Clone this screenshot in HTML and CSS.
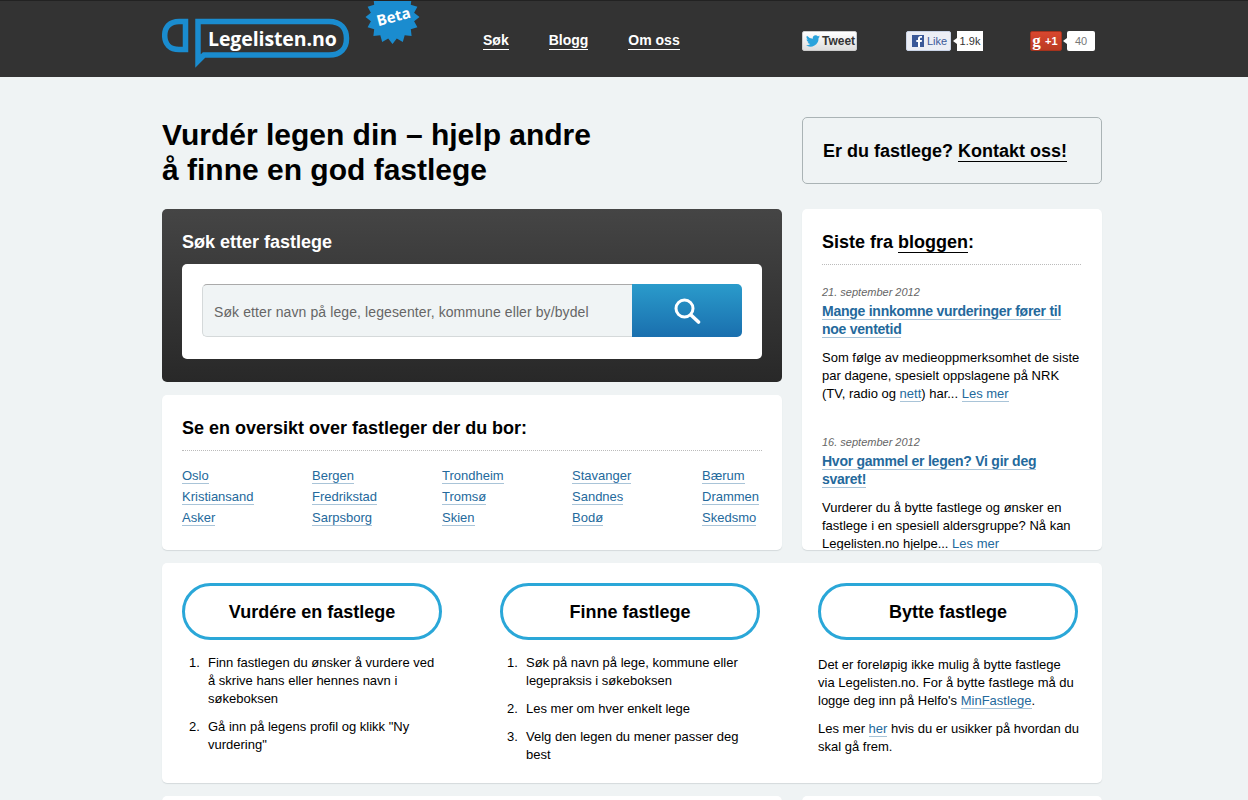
FILE: index.html
```html
<!DOCTYPE html>
<html lang="no">

<head>
  <meta charset="UTF-8">
  <title>Legelisten.no</title>
  <link rel="stylesheet" href="styles.css">
</head>

<body>
  <div class="header">
    <div class="wrap header-inner">
      <a class="logo" href="#">
        <svg class="logo-mark" width="190" height="50" viewBox="0 0 190 50">
          <path d="M23.500 3.500H17C8 3.500 2.700 9 2.700 17.500S8 31.500 17 31.500H23.500Z" fill="none" stroke="#1a8ccf" stroke-width="5.500"/>
          <path d="M36 43V3.500H167C179 3.500 184.500 11 184.500 20.500S179 37 167 37H42Z" fill="none" stroke="#1a8ccf" stroke-width="5.500"/>
        </svg>
        <span class="logo-text">Legelisten.no</span>
        <span class="beta">
          <svg width="56" height="46" viewBox="0 0 56 46">
            <polygon fill="#1a8ccf" transform="translate(0,-4)" points="54.500,20 49.100,24.300 52.400,30.300 45.800,32.200 46.600,39.100 39.700,38.300 37.800,44.900 31.800,41.600 27.500,47 23.200,41.600 17.200,44.900 15.300,38.300 8.400,39.100 9.200,32.200 2.600,30.300 5.900,24.300 0.500,20 5.900,15.700 2.600,9.700 9.200,7.800 8.400,0.900 15.300,1.700 17.200,-4.900 23.200,-1.600 27.500,-7 31.800,-1.600 37.800,-4.900 39.700,1.700 46.600,0.900 45.800,7.800 52.400,9.700 49.100,15.700"/>
          </svg>
          <span class="beta-text">Beta</span>
        </span>
      </a>

      <div class="main-nav">
        <a href="#">Søk</a>
        <a href="#">Blogg</a>
        <a href="#">Om oss</a>
      </div>

      <div class="social">
        <div class="share share-tw">
          <span class="btn btn-tw">
            <svg width="14" height="12" viewBox="0 0 24 20"><path fill="#2aa3dc" d="M24 2.400a9.800 9.800 0 0 1-2.800.8A5 5 0 0 0 23.300.5a9.800 9.800 0 0 1-3.100 1.200 4.900 4.900 0 0 0-8.400 4.500A14 14 0 0 1 1.700.9a4.900 4.900 0 0 0 1.500 6.600 4.900 4.900 0 0 1-2.200-.6c0 2.400 1.700 4.400 3.900 4.900a4.900 4.900 0 0 1-2.200.1 4.900 4.900 0 0 0 4.600 3.400A9.900 9.900 0 0 1 0 17.300 14 14 0 0 0 21.500 4.900 10 10 0 0 0 24 2.400Z"/></svg>
            Tweet
          </span>
        </div>
        <div class="share share-fb">
          <span class="btn btn-fb">
            <svg class="fb-icon" width="12" height="12" viewBox="0 0 12 12"><rect width="12" height="12" fill="#3b5998"/><path fill="#fff" d="M8 12V7h1.700l.3-2H8V3.900C8 3.200 8.200 2.800 9.100 2.800H10V1.100C9.700 1 9.200 1 8.600 1 7.100 1 6 1.900 6 3.600V5H4.300v2H6v5Z"/></svg>
            Like
          </span>
          <span class="count">1.9k</span>
        </div>
        <div class="share share-gp">
          <span class="btn btn-gp"><span class="gp-g">g</span>+1</span>
          <span class="count count-gp">40</span>
        </div>
      </div>
    </div>
  </div>

  <div class="wrap">
    <div class="intro">
      <h1>Vurdér legen din – hjelp andre<br>å finne en god fastlege</h1>
      <div class="contact-box">Er du fastlege? <a href="#">Kontakt oss!</a></div>
    </div>

    <div class="columns">
      <div class="left-col">
        <div class="search-panel">
          <h2>Søk etter fastlege</h2>
          <div class="search-box">
            <div class="search-field">Søk etter navn på lege, legesenter, kommune eller by/bydel</div>
            <button class="search-button">
              <svg width="28" height="28" viewBox="0 0 28 28"><circle cx="11.500" cy="11.500" r="8.500" fill="none" stroke="#fff" stroke-width="3"/><path d="M18 18l7.500 7" stroke="#fff" stroke-width="3.600" stroke-linecap="round"/></svg>
            </button>
          </div>
        </div>

        <div class="card places">
          <h3>Se en oversikt over fastleger der du bor:</h3>
          <div class="place-grid">
            <div><a href="#">Oslo</a></div>
            <div><a href="#">Bergen</a></div>
            <div><a href="#">Trondheim</a></div>
            <div><a href="#">Stavanger</a></div>
            <div><a href="#">Bærum</a></div>
            <div><a href="#">Kristiansand</a></div>
            <div><a href="#">Fredrikstad</a></div>
            <div><a href="#">Tromsø</a></div>
            <div><a href="#">Sandnes</a></div>
            <div><a href="#">Drammen</a></div>
            <div><a href="#">Asker</a></div>
            <div><a href="#">Sarpsborg</a></div>
            <div><a href="#">Skien</a></div>
            <div><a href="#">Bodø</a></div>
            <div><a href="#">Skedsmo</a></div>
          </div>
        </div>
      </div>

      <div class="card blog">
        <h3>Siste fra <a href="#">bloggen</a>:</h3>
        <div class="post">
          <div class="post-date">21. september 2012</div>
          <h4><a href="#">Mange innkomne vurderinger fører til noe ventetid</a></h4>
          <p>Som følge av medieoppmerksomhet de siste par dagene, spesielt oppslagene på NRK (TV, radio og <a href="#">nett</a>) har... <a href="#">Les mer</a></p>
        </div>
        <div class="post">
          <div class="post-date">16. september 2012</div>
          <h4><a href="#">Hvor gammel er legen? Vi gir deg svaret!</a></h4>
          <p>Vurderer du å bytte fastlege og ønsker en fastlege i en spesiell aldersgruppe? Nå kan Legelisten.no hjelpe... <a href="#">Les mer</a></p>
        </div>
      </div>
    </div>

    <div class="card howto">
      <div class="howto-col">
        <div class="pill">Vurdére en fastlege</div>
        <ol>
          <li>Finn fastlegen du ønsker å vurdere ved å skrive hans eller hennes navn i søkeboksen</li>
          <li>Gå inn på legens profil og klikk "Ny vurdering"</li>
        </ol>
      </div>
      <div class="howto-col">
        <div class="pill">Finne fastlege</div>
        <ol>
          <li>Søk på navn på lege, kommune eller legepraksis i søkeboksen</li>
          <li>Les mer om hver enkelt lege</li>
          <li>Velg den legen du mener passer deg best</li>
        </ol>
      </div>
      <div class="howto-col">
        <div class="pill">Bytte fastlege</div>
        <p>Det er foreløpig ikke mulig å bytte fastlege via Legelisten.no. For å bytte fastlege må du logge deg inn på Helfo's <a href="#">MinFastlege</a>.</p>
        <p class="wide">Les mer <a href="#">her</a> hvis du er usikker på hvordan du<br>skal gå frem.</p>
      </div>
    </div>

    <div class="bottom-row">
      <div class="card bottom-left"></div>
      <div class="card bottom-right"></div>
    </div>
  </div>
</body>

</html>
```

FILE: styles.css
```css
html {
  overflow: hidden;
}

body {
  margin: 0;
  background: #eff3f4;
  color: #000;
  font-family: "Liberation Sans", Arial, sans-serif;
  font-size: 13px;
  line-height: 18px;
}

a {
  color: #24699c;
  text-decoration: none;
  border-bottom: 1px solid #a9c4d8;
}

.wrap {
  width: 940px;
  margin-left: 162px;
}

.header {
  height: 76px;
  background: #333;
  border-top: 1px solid #222;
}

.header-inner {
  display: flex;
  position: relative;
  height: 76px;
}

.logo {
  display: block;
  position: relative;
  width: 260px;
  border: none;
}

.logo-mark {
  position: absolute;
  left: 0;
  top: 17px;
}

.logo-text {
  position: absolute;
  left: 46px;
  top: 24px;
  color: #fff;
  font-family: "Open Sans", sans-serif;
  font-size: 19.500px;
  font-weight: 700;
  line-height: 28px;
  letter-spacing: -0.1px;
}

.beta {
  position: absolute;
  left: 203px;
  top: 0;
  width: 56px;
  height: 46px;
  overflow: hidden;
}

.beta svg {
  display: block;
}

.beta-text {
  position: absolute;
  left: 11px;
  top: 6px;
  color: #fff;
  font-family: "Open Sans", sans-serif;
  font-size: 15px;
  font-weight: 700;
  line-height: 18px;
  transform: rotate(-15deg);
}

.main-nav {
  display: flex;
  gap: 40px;
  margin-left: 61px;
  padding-top: 31px;
}

.main-nav a {
  height: 17px;
  color: #fff;
  font-size: 14px;
  font-weight: 700;
  line-height: 17px;
  border-bottom: 1px solid #fff;
}

.social {
  position: absolute;
  left: 640px;
  top: 30px;
  display: flex;
}

.share {
  display: flex;
  align-items: flex-start;
  height: 21px;
}

.share-tw {
  width: 104px;
}

.share-fb {
  width: 124px;
}

.btn {
  display: flex;
  align-items: center;
  box-sizing: border-box;
  height: 20px;
  font-size: 11px;
  line-height: 18px;
  border: 1px solid #ccc;
  border-radius: 2px;
}

.btn-tw {
  width: 55px;
  gap: 2px;
  padding-left: 3px;
  color: #333;
  font-size: 12px;
  font-weight: 700;
  white-space: nowrap;
  background: linear-gradient(#fff, #dedede);
}

.btn-fb {
  width: 45px;
  padding-left: 5px;
  color: #3b5998;
  background: #eceef5;
  border-color: #cad4e7;
}

.fb-icon {
  margin-right: 3px;
}

.btn-gp {
  width: 32px;
  color: #fff;
  font-size: 11px;
  font-weight: 700;
  background: linear-gradient(#d8472f, #bb3b22);
  border-color: #a5331d;
}

.gp-g {
  width: 11px;
  margin-right: 3px;
  font-family: "Liberation Serif", serif;
  font-size: 17px;
  text-align: center;
}

.count {
  position: relative;
  box-sizing: border-box;
  width: 26px;
  height: 20px;
  margin-left: 6px;
  color: #333;
  font-size: 11px;
  line-height: 20px;
  text-align: center;
  background: #fff;
}

.count::before {
  content: "";
  position: absolute;
  left: -4px;
  top: 7px;
  border: 3px solid transparent;
  border-left: 0;
  border-right: 4px solid #fff;
}

.count-gp {
  width: 28px;
  margin-left: 5px;
  color: #777;
  border-radius: 2px;
}

.intro {
  display: flex;
  justify-content: space-between;
  padding-top: 40px;
}

h1 {
  margin: 0;
  font-size: 30px;
  font-weight: 700;
  line-height: 35px;
}

.contact-box {
  box-sizing: border-box;
  width: 300px;
  height: 67px;
  padding-left: 20px;
  font-size: 18px;
  font-weight: 700;
  line-height: 67px;
  border: 1px solid #aab3b5;
  border-radius: 5px;
}

.contact-box a {
  color: #000;
  border-bottom: 1px solid #000;
}

.columns {
  display: flex;
  justify-content: space-between;
  margin-top: 22px;
}

.left-col {
  display: flex;
  flex-direction: column;
  gap: 13px;
  width: 620px;
}

.card {
  background: #fff;
  border-radius: 5px;
  box-shadow: 0 1px 1px #d4dadc;
}

.search-panel {
  box-sizing: border-box;
  height: 173px;
  padding: 20px;
  color: #fff;
  background: linear-gradient(#454545, #282828);
  border-radius: 5px;
}

.search-panel h2 {
  margin: 0 0 9px;
  font-size: 18px;
  line-height: 26px;
}

.search-box {
  display: flex;
  height: 53px;
  padding: 20px 20px 22px;
  background: #fff;
  border-radius: 5px;
}

.search-field {
  flex: 1;
  box-sizing: border-box;
  padding-left: 11px;
  color: #666;
  font-size: 14px;
  line-height: 54px;
  letter-spacing: 0.1px;
  background: #f0f4f5;
  border: 1px solid #d5d9da;
  border-top-color: #aaa;
  border-right: none;
  border-radius: 5px 0 0 5px;
}

.search-button {
  width: 110px;
  padding: 3px 0 0;
  background: linear-gradient(#2a9bcb, #1a6fae);
  border: none;
  border-radius: 0 5px 5px 0;
}

.places {
  box-sizing: border-box;
  height: 155px;
  padding: 20px;
}

h3 {
  margin: 0;
  font-size: 18px;
  line-height: 26px;
}

.places h3 {
  padding-bottom: 9px;
  border-bottom: 1px dotted #bbb;
}

.place-grid {
  display: grid;
  grid-template-columns: repeat(5, 130px);
  margin-top: 14px;
  line-height: 21px;
}

.blog {
  box-sizing: border-box;
  width: 300px;
  height: 341px;
  padding: 20px 21px 20px 20px;
  overflow: hidden;
}

.blog h3 {
  padding-bottom: 9px;
  border-bottom: 1px dotted #bbb;
}

.blog h3 a {
  color: #000;
  border-bottom: 1px solid #000;
}

.post {
  margin-top: 18px;
  margin-bottom: 30px;
}

.post-date {
  margin-bottom: 1px;
  color: #666;
  font-size: 11px;
  font-style: italic;
  line-height: 18px;
}

.post h4 {
  margin: 0 0 11px;
  font-size: 14px;
  line-height: 18px;
  letter-spacing: -0.25px;
}

.post p {
  margin: 0;
}

.howto {
  display: flex;
  gap: 58px;
  box-sizing: border-box;
  height: 220px;
  margin-top: 13px;
  padding: 20px;
}

.howto-col {
  width: 260px;
}

.pill {
  box-sizing: border-box;
  height: 57px;
  margin-bottom: 14px;
  font-size: 18px;
  font-weight: 700;
  line-height: 53px;
  text-align: center;
  border: 3px solid #2aa7d8;
  border-radius: 29px;
}

ol {
  margin: 0;
  padding: 0;
  list-style: none;
  counter-reset: step;
}

li {
  display: flex;
  margin-bottom: 10px;
  padding: 0 5px 0 7px;
  counter-increment: step;
}

li::before {
  content: counter(step) ".";
  flex: 0 0 19px;
}

.howto-col p {
  margin: 0 0 10px;
}

.howto-col .wide {
  margin-right: -4px;
}

.pill + p {
  margin-top: 16px;
}

.bottom-row {
  display: flex;
  justify-content: space-between;
  margin-top: 13px;
}

.bottom-left {
  width: 620px;
  height: 100px;
}

.bottom-right {
  width: 300px;
  height: 100px;
}
```
